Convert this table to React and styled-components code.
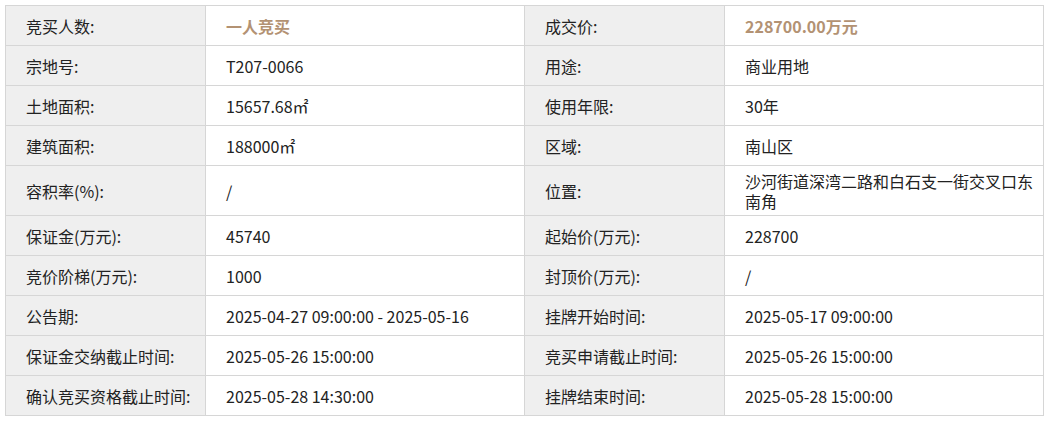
import React from "react";
import styled, { createGlobalStyle } from "styled-components";

const Global = createGlobalStyle`
  html, body { margin: 0; padding: 0; background: #fff; }
  body { font-family: "Noto Sans CJK SC", "Noto Sans", sans-serif; color: #222; }
`;

const Wrap = styled.div`
  padding: 5px 6px 0 5px;
`;

const Table = styled.table`
  width: 100%;
  border-collapse: collapse;
  table-layout: fixed;
  border: 1px solid #d6d6d6;
  font-size: 16px;
  line-height: 20px;
`;

const Label = styled.td`
  background: #efefef;
  border: 1px solid #d6d6d6;
  padding: 4.5px 6px 4.5px 20px;
  height: 30px;
  vertical-align: middle;
  color: #222;
`;

const Value = styled.td`
  border: 1px solid #d6d6d6;
  padding: 4.5px 6px 4.5px 20px;
  height: 30px;
  vertical-align: middle;
  color: ${(p) => (p.$accent ? "#b39273" : "#222")};
  font-weight: ${(p) => (p.$accent ? 700 : 400)};
`;

const LabelCol = styled.col`
  width: 200px;
`;

const rows = [
  ["竞买人数:", "一人竞买", "成交价:", "228700.00万元", true],
  ["宗地号:", "T207-0066", "用途:", "商业用地"],
  ["土地面积:", "15657.68㎡", "使用年限:", "30年"],
  ["建筑面积:", "188000㎡", "区域:", "南山区"],
  ["容积率(%):", "/", "位置:", "沙河街道深湾二路和白石支一街交叉口东南角"],
  ["保证金(万元):", "45740", "起始价(万元):", "228700"],
  ["竞价阶梯(万元):", "1000", "封顶价(万元):", "/"],
  ["公告期:", "2025-04-27 09:00:00 - 2025-05-16", "挂牌开始时间:", "2025-05-17 09:00:00"],
  ["保证金交纳截止时间:", "2025-05-26 15:00:00", "竞买申请截止时间:", "2025-05-26 15:00:00"],
  ["确认竞买资格截止时间:", "2025-05-28 14:30:00", "挂牌结束时间:", "2025-05-28 15:00:00"],
];

export default function App() {
  return (
    <Wrap>
      <Global />
      <Table>
        <colgroup>
          <LabelCol />
          <col />
          <LabelCol />
          <col />
        </colgroup>
        <tbody>
          {rows.map(([l1, v1, l2, v2, acc]) => (
            <tr key={l1}>
              <Label>{l1}</Label>
              <Value $accent={acc}>{v1}</Value>
              <Label>{l2}</Label>
              <Value $accent={acc}>{v2}</Value>
            </tr>
          ))}
        </tbody>
      </Table>
    </Wrap>
  );
}
